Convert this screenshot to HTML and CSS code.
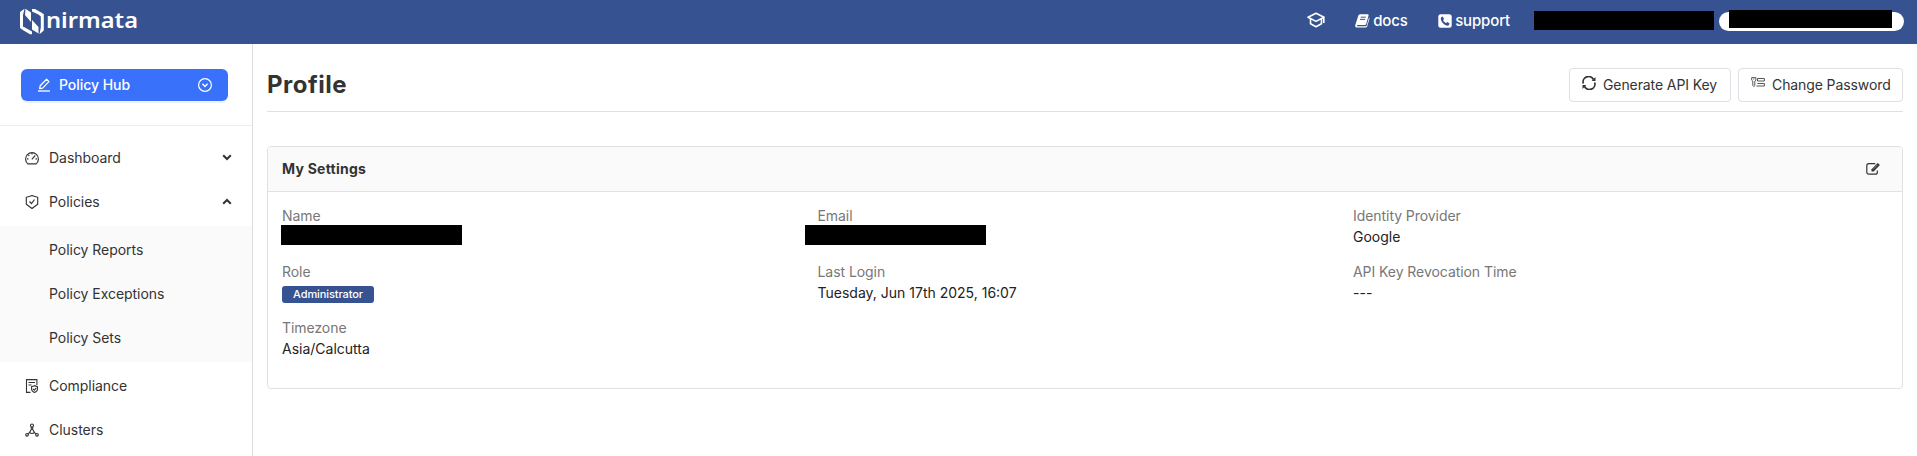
FILE: index.html
```html
<!DOCTYPE html>
<html lang="en">
<head>
<meta charset="utf-8">
<title>Nirmata - Profile</title>
<link rel="stylesheet" href="styles.css">
</head>
<body>
<header class="topbar">
  <a class="brand">
    <svg class="brand-mark" width="24" height="27" viewBox="0 0 24 27" fill="#fff">
      <path d="M4.500.8 0 4v16l4.300 3V19.500L3 18.500V7z"/>
      <path d="M5.500.8 11 4.500V14L5 7z"/>
      <path d="M12 1h3l7 4v3.200l-2-1L12 3.500z"/>
      <path d="M19.500 26.200 23.800 22.500V6L19.500 4v3.500l1.300 1V19.500z"/>
      <path d="M18.500 25.500 12 21.500V12L18.500 19z"/>
      <path d="M4 19l8 4.500v2.700H10L4 22.800z"/>
    </svg>
    <svg class="brand-name" width="96" height="30" viewBox="0 0 96 30"><text x="0" y="20" textLength="92" lengthAdjust="spacingAndGlyphs">nirmata</text></svg>
  </a>
  <nav class="topnav">
    <a class="toplink learn"><svg width="18" height="16" viewBox="0 0 18 16" fill="none" stroke="#fff" stroke-width="1.600" stroke-linejoin="round"><path d="M1 5.300 9 1.200l8 4.100L9 9.400zM3.500 7v4.800L9 14.800l5.500-3V7M16.800 5.500V11"/></svg></a>
    <a class="toplink docs"><svg width="15" height="14" viewBox="0 0 15 14"><path fill="#fff" d="M5.200.3h7.300c.9 0 1.300.6 1 1.500L11.200 10c-.2.800-.8 1-1.600 1H2.500c-.8 0-1 1.100 0 1.200h8.200c.6 0 .9-.2 1.100-.9L14 3.600c.6.300.6.900.4 1.500l-2.200 7.200c-.3.900-.9 1.300-1.800 1.300H2.100C.7 13.600-.2 12.200.3 10.900L3.200 2C3.500 1 4.200.3 5.200.3z"/><path d="M5.700 3.200h5.100M5 5.400h5.100" stroke="#375291"/></svg>docs</a>
    <a class="toplink support"><svg width="14" height="14" viewBox="0 0 14 14"><rect x=".3" y=".3" width="13.400" height="13.400" rx="2.500" fill="#fff"/><path fill="#375291" d="M4.700 2.500 3.200 3.300C2 5.300 4 8.700 6 10.200c1.700 1.300 4 2 4.900.9l.7-1.700-2.300-1.400-1.300 1C6.700 8.500 5.500 7 5.100 5.900l1-1z"/></svg>support</a>
    <span class="mask account"></span>
    <span class="pill"><span class="mask tenant"></span></span>
  </nav>
</header>
<div class="layout">
  <aside class="sidebar">
    <div class="switcher">
      <button class="hub">
        <svg width="14" height="14" viewBox="0 0 14 14" fill="none" stroke="#fff"><path d="M1 13h12" stroke-width="1.300"/><path d="M2.700 10.700l.5-3L9.600 1.300l2.300 2.300-6.300 6.500z" stroke-width="1.300" stroke-linejoin="round"/></svg>
        <span>Policy Hub</span>
        <svg class="hub-caret" width="14" height="14" viewBox="0 0 14 14" fill="none" stroke="#fff"><circle cx="7" cy="7" r="6.400" stroke-width="1.200"/><path d="M4.400 5.800 7 8.500l2.600-2.700" stroke-width="1.300"/></svg>
      </button>
    </div>
    <ul class="menu">
      <li class="item"><svg width="14" height="14" viewBox="0 0 14 14" fill="none" stroke="#333" stroke-width="1.150"><path d="M2.800 12.900A6.400 6.400 0 1 1 11.200 12.900z" stroke-linejoin="round"/><path d="M7 2v1.600M3.300 3.800l1 1M2 7.800h1.500M10.500 7.800H12M6.800 8.300l3.400-3.800"/></svg><span>Dashboard</span><svg class="caret" width="10" height="7" viewBox="0 0 10 7" fill="none" stroke="#333" stroke-width="2"><path d="M1.200 1.200 5 5l3.800-3.800"/></svg></li>
      <li class="item"><svg width="14" height="14" viewBox="0 0 14 14" fill="none" stroke="#333" stroke-width="1.150"><path d="M7 .6C5 1.500 3 2 1.300 2.200V9.300L7 13.500l5.700-4.200V2.200C11 2 9 1.500 7 .6z" stroke-linejoin="round"/><path d="M4.500 6.500 6.500 8.500l3-4" stroke-width="1.200"/></svg><span>Policies</span><svg class="caret" width="10" height="7" viewBox="0 0 10 7" fill="none" stroke="#333" stroke-width="2"><path d="M1.200 5.800 5 2l3.800 3.800"/></svg></li>
      <li>
        <ul class="submenu">
          <li class="item">Policy Reports</li>
          <li class="item">Policy Exceptions</li>
          <li class="item">Policy Sets</li>
        </ul>
      </li>
      <li class="item"><svg width="14" height="14" viewBox="0 0 14 14" fill="none" stroke="#333" stroke-width="1.100"><path d="M5.500 13.400H1.500V.6h10.400v5.300M3.500 3.500h6.500M3.500 6h3"/><path d="M9.500 6.700 6.600 7.700v2.600c0 1.500 1.300 2.500 2.900 3.100 1.600-.6 3-1.600 3-3.100V7.700zM8 9.900l1.300 1.200 2-2.300"/></svg><span>Compliance</span></li>
      <li class="item"><svg width="14" height="14" viewBox="0 0 14 14" fill="none" stroke="#333" stroke-width="1.150"><circle cx="7" cy="2.500" r="1.500"/><circle cx="2" cy="11.800" r="1.300"/><circle cx="12" cy="11.800" r="1.300"/><path d="M6.300 4v2.500L4 10.200 3 11M7.700 4v2.500L10 10.200l1 .8M5 9.800c1 .9 3 .9 4 0"/></svg><span>Clusters</span></li>
    </ul>
  </aside>
  <main class="content">
    <div class="page-head">
      <h1>Profile</h1>
      <div class="actions">
        <button class="btn generate"><svg width="14" height="14" viewBox="0 0 14 14" fill="none" stroke="#333" stroke-width="1.700"><path d="M1.300 7.500A5.500 5.500 0 0 1 11.500 3.500M12.700 6.500A5.500 5.500 0 0 1 2.500 10.500"/><path d="M13.500 1v4H9.700zM.5 13V9h3.800z" fill="#333" stroke="none"/></svg>Generate API Key</button>
        <button class="btn change"><svg width="14" height="14" viewBox="0 0 14 14" fill="none" stroke="#444" stroke-width=".9"><path d="M.7 1.600h4.200v2.600L3.800 5.100v4.500L2.700 10.500 1.800 9.600V5.100L.7 4.200zM2.300 3h1.100M6.500 2.500h6.900v2.500H6.500zM6.500 7.500h6.900v2.500H5.500"/></svg>Change Password</button>
      </div>
    </div>
    <section class="card">
      <div class="card-head">
        <h2>My Settings</h2>
        <svg width="15" height="14" viewBox="0 0 15 14" fill="none" stroke="#333"><path d="M9.300 1.700H2.800A2 2 0 0 0 .8 3.700v6.500a2 2 0 0 0 2 2h6.500a2 2 0 0 0 2-2V8.500" stroke-width="1.200"/><path d="M5.500 9.500V7.200L11.700.9l2.200 2.200-6.200 6.400z" fill="#333" stroke="none"/><path d="M7 7.400l4.500-4.600" stroke="#bbb" stroke-width=".6"/></svg>
      </div>
      <div class="fields">
        <div class="field"><div class="label">Name</div><div class="value"><span class="mask name"></span></div></div>
        <div class="field"><div class="label">Email</div><div class="value"><span class="mask email"></span></div></div>
        <div class="field"><div class="label">Identity Provider</div><div class="value">Google</div></div>
        <div class="field"><div class="label">Role</div><div class="value"><span class="badge">Administrator</span></div></div>
        <div class="field"><div class="label">Last Login</div><div class="value">Tuesday, Jun 17th 2025, 16:07</div></div>
        <div class="field"><div class="label">API Key Revocation Time</div><div class="value">---</div></div>
        <div class="field"><div class="label">Timezone</div><div class="value">Asia/Calcutta</div></div>
      </div>
    </section>
  </main>
</div>
</body>
</html>
```

FILE: styles.css
```css
* { box-sizing: border-box; }
body { margin: 0; height: 456px; overflow: hidden; background: #fff; color: #333; font: 14px/21px Inter, "Liberation Sans", sans-serif; }
h1, h2, ul { margin: 0; padding: 0; }
ul { list-style: none; }
svg { display: block; flex: none; }
button { font: inherit; color: inherit; }
.mask { display: block; background: #000; flex: none; }

.topbar { height: 44px; background: #375291; display: flex; justify-content: space-between; padding: 0 13px 0 20px; }
.brand { display: flex; align-items: flex-start; gap: 2px; padding-top: 8px; }
.brand-name { overflow: visible; }
.brand-name text { font: 600 22px "Noto Sans", sans-serif; fill: #fff; }
.topnav { display: flex; align-items: flex-start; }
.toplink { display: flex; align-items: center; gap: 4px; height: 41px; color: #fff; font-size: 15px; font-weight: 500; letter-spacing: -.15px; }
.learn { margin-right: 30px; height: 39px; }
.docs { margin-right: 30px; }
.support { margin-right: 24px; }
.docs svg, .support svg { margin-right: -.5px; }
.account { width: 180px; height: 19px; margin: 11px 5px 0 0; }
.pill { width: 185px; height: 19px; margin-top: 12px; background: #fff; border-radius: 10px; }
.tenant { width: 163px; height: 18px; margin: -2px 0 0 10px; }

.layout { display: flex; height: 412px; }
.sidebar { width: 253px; flex: none; border-right: 1px solid #dedede; }
.switcher { height: 82px; padding: 25px 24px 0 21px; border-bottom: 1px solid #eee; }
.hub { display: flex; align-items: center; width: 207px; height: 32px; padding: 0 16px 0 16px; gap: 8px; border: 0; border-radius: 6px; background: #3971fb; color: #fff; font-weight: 500; letter-spacing: -.05px; box-shadow: 0 2px 0 #edf4ff; }
.hub span { padding-bottom: 1px; }
.hub-caret { margin-left: auto; }
.menu { padding-top: 10px; }
.menu .item { height: 44px; display: flex; align-items: center; gap: 10px; padding: 0 20px 1px 25px; letter-spacing: -.04px; }
.caret { margin-left: auto; }
.submenu { margin: 2px 0; padding: 2px 0; background: #fafafa; }
.menu .submenu .item { padding-left: 49px; }

.content { flex: 1; padding: 0 14px; }
.page-head { display: flex; justify-content: space-between; align-items: flex-start; height: 68px; padding-top: 24px; border-bottom: 1px solid #e0e0e0; }
h1 { font-size: 24px; line-height: 34px; font-weight: 700; letter-spacing: .5px; }
.actions { display: flex; gap: 7px; }
.btn { display: flex; align-items: center; gap: 7px; height: 34px; padding: 0 12px 1px; background: #fff; border: 1px solid #dedfe3; border-radius: 4px; white-space: nowrap; letter-spacing: -.1px; }
.generate { width: 162px; }
.change { width: 165px; }
.btn svg { margin-bottom: 3px; }
.card { height: 243px; margin-top: 34px; border: 1px solid #e0e1e3; border-radius: 4px; }
.card-head { display: flex; align-items: center; justify-content: space-between; height: 45px; padding: 0 21px 1px 14px; background: #fafafa; border-bottom: 1px solid #e0e1e3; border-radius: 3px 3px 0 0; }
h2 { font-size: 14px; font-weight: 700; letter-spacing: .25px; }
.fields { display: grid; grid-template-columns: repeat(3, 535.500px); grid-auto-rows: 56px; padding: 13px 0 0 14px; }
.label { color: #777; letter-spacing: -.06px; }
.value { height: 21px; color: #222; }
.name, .email { width: 181px; height: 20px; margin-left: -1.500px; transform: translateY(-1px); }
.email { margin-left: -13px; }
.badge { display: block; width: 92px; height: 17px; background: #375291; border-radius: 3px; color: #fff; font-size: 11px; line-height: 17px; font-weight: 500; letter-spacing: -.1px; text-align: center; transform: translateY(4px); }
```
